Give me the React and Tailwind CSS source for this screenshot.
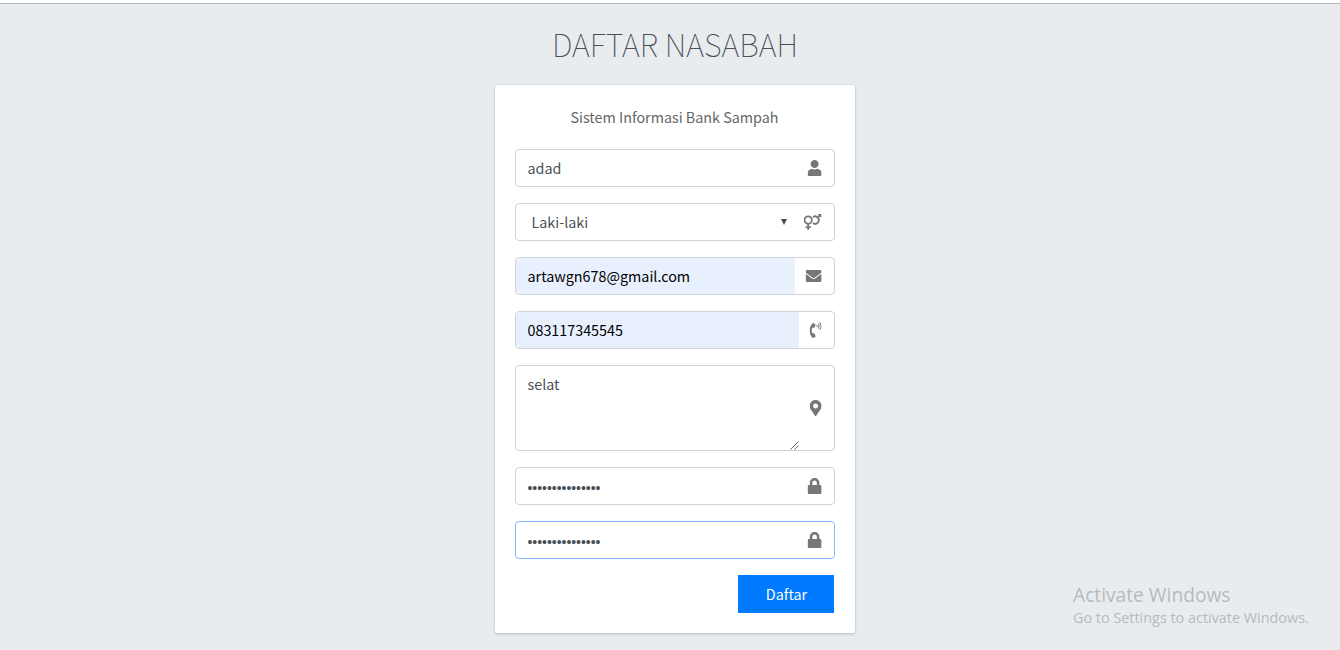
import { FaUser, FaEnvelope, FaPhoneVolume, FaMapMarkerAlt, FaLock } from "react-icons/fa";

function Field({ children, icon, tint = "", border = "border-[#ced4da]", height = "h-[38px]" }) {
  return (
    <div className={`mb-4 flex ${height} overflow-hidden rounded-[4px] border ${border} bg-white`}>
      <div className={`flex min-w-0 flex-1 ${tint}`}>{children}</div>
      <div className="flex -translate-x-[0.4px] items-center pr-3 text-[16px] text-[#777777]">{icon}</div>
    </div>
  );
}

function GenderIcon() {
  return (
    <svg className="h-4 w-[18px]" viewBox="0 0 18 16" fill="none" stroke="currentColor" strokeWidth="1.8">
      <circle cx="4.6" cy="6.1" r="3.7" />
      <path d="M4.6 9.8V16M2 13.1h5.2" />
      <path d="M9.3 3.1a3.7 3.7 0 1 1 0 6M14 3.6l2.6-2.5" />
      <path d="M14 0h3.9v3.9z" fill="currentColor" stroke="none" />
    </svg>
  );
}

const inputClass = "h-9 w-full min-w-0 bg-transparent pb-px pl-[11.5px] leading-6 outline-none";

function Dots() {
  return (
    <div className="flex h-9 items-center pl-[11.5px] pt-[4px] font-['Liberation_Sans',sans-serif] text-[14px] leading-6 tracking-[-0.04px]">
      •••••••••••••••
    </div>
  );
}

export default function App() {
  return (
    <div className="flex h-[650px] w-[1340px] flex-col overflow-hidden bg-[#e9ecef] font-['Noto_Sans_CJK_SC',sans-serif] text-[14.33px] text-[#495057]">
      <div className="h-1 shrink-0 border-b border-[#b4b4bb] bg-white" />
      <div className="relative flex flex-1 flex-col items-center pl-[10px]">
        <h1 className="mt-[15px] h-[50px] text-[30.9px] leading-[50px] font-thin">DAFTAR NASABAH</h1>
        <main className="mt-4 h-[548px] w-[360px] rounded-[2px] bg-white px-5 pt-5 shadow-[0_0_1px_rgba(0,0,0,0.125),0_1px_3px_rgba(0,0,0,0.2)]">
          <p className="mb-5 h-6 pr-px text-center leading-6 text-[#666666]">Sistem Informasi Bank Sampah</p>
          <Field icon={<FaUser className="h-4 w-[14px]" />}>
            <input className={inputClass} defaultValue="adad" />
          </Field>
          <Field icon={<GenderIcon />}>
            <div className="flex flex-1 items-center justify-between pr-[17px] pb-px pl-[15.5px] leading-6">
              <span>Laki-laki</span>
              <svg className="h-[6px] w-[6px]" viewBox="0 0 6 6" fill="currentColor">
                <path d="M0 0h6L3 6z" />
              </svg>
            </div>
          </Field>
          <Field tint="bg-[#e8f0fe] mr-[11px] text-black" icon={<FaEnvelope className="h-4 w-4" />}>
            <input className={inputClass} defaultValue="artawgn678@gmail.com" />
          </Field>
          <Field tint="bg-[#e8f0fe] mr-[11px] text-black" icon={<FaPhoneVolume className="h-4 w-3" />}>
            <input className={inputClass} defaultValue="083117345545" />
          </Field>
          <Field height="h-[86px]" tint="mr-[11px]" icon={<FaMapMarkerAlt className="h-4 w-3" />}>
            <textarea className="h-[84px] min-w-0 flex-1 resize-none pt-[6px] pl-[11.5px] leading-6 outline-none" defaultValue="selat" />
            <svg className="h-[9px] w-[9px] self-end" viewBox="0 0 9 9" stroke="#555" strokeWidth="0.9">
              <path d="M0.5 8.5l8-8M4.5 8.5l4-4" />
            </svg>
          </Field>
          <Field icon={<FaLock className="h-4 w-[14px]" />}>
            <Dots />
          </Field>
          <Field border="border-[#80bdff]" icon={<FaLock className="h-4 w-[14px]" />}>
            <Dots />
          </Field>
          <button className="mr-px ml-auto block h-[38px] w-24 bg-[#007bff] pb-px pl-px leading-6 text-white">Daftar</button>
        </main>
        <aside className="absolute top-[579px] left-[1073px] font-['Open_Sans',sans-serif] whitespace-nowrap text-[#b7babc]">
          <div className="h-[25px] text-[19.2px] leading-[24px]">Activate Windows</div>
          <div className="h-5 text-[14.4px] leading-5">Go to Settings to activate Windows.</div>
        </aside>
      </div>
    </div>
  );
}
